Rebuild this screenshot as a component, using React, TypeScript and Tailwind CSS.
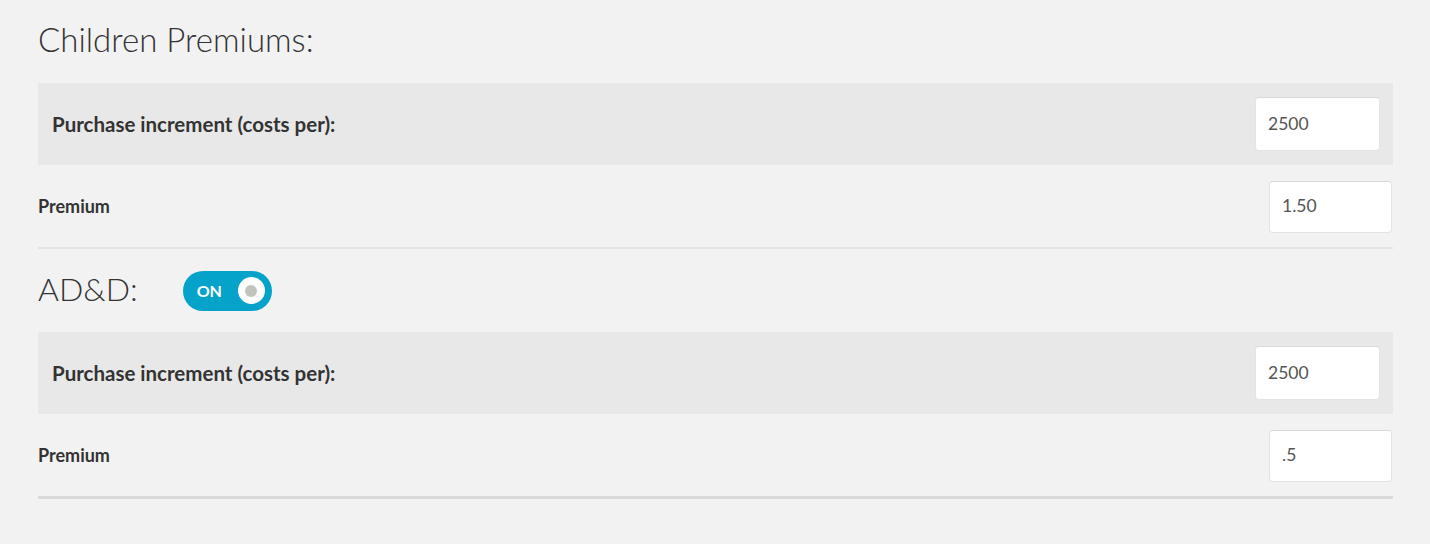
import React from "react";

function InputBox({ value, className }: { value: string; className: string }) {
  return (
    <div
      className={
        "flex items-center rounded-[4px] border border-[#e3e3e3] border-t-[#d9d9d9] bg-white pl-[12px] text-[17.5px] text-[#555555] " +
        className
      }
    >
      {value}
    </div>
  );
}

function Section({ premium }: { premium: string }) {
  return (
    <>
      <div className="flex h-[82px] items-center justify-between bg-[#e8e8e8] pl-[14px] pr-[13px]">
        <span className="text-[20.5px] font-bold text-[#333333]">Purchase increment (costs per):</span>
        <InputBox value="2500" className="h-[54px] w-[125px]" />
      </div>
      <div className="flex h-[82px] items-center justify-between">
        <span className="text-[18px] font-bold text-[#333333]">Premium</span>
        <InputBox value={premium} className="mr-[1px] mt-[1px] h-[52px] w-[123px]" />
      </div>
    </>
  );
}

export default function App() {
  return (
    <div
      className="min-h-[544px] w-full bg-[#f2f2f2] pl-[38px] pr-[37px]"
      style={{ fontFamily: "Lato, 'Open Sans', sans-serif" }}
    >
      <div className="flex h-[83px] items-center pb-[4px]">
        <h2 className="text-[33px] font-light text-[#333333]">Children Premiums:</h2>
      </div>
      <div className="border-b-2 border-[#e4e4e4]">
        <Section premium="1.50" />
      </div>
      <div className="flex h-[83px] items-center gap-[45px]">
        <h2 className="text-[32px] font-light text-[#333333] pb-[4px]">AD&amp;D:</h2>
        <div className="flex h-[40px] w-[89px] items-center justify-between rounded-full bg-[#05a3c9] pl-[14px] pr-[7px]">
          <span className="text-[16px] font-bold text-white">ON</span>
          <div className="flex h-[27px] w-[27px] items-center justify-center rounded-full bg-white">
            <div className="h-[12px] w-[12px] rounded-full bg-[#c1c4bd]" />
          </div>
        </div>
      </div>
      <div className="border-b-[3px] border-[#d9d9d9]">
        <Section premium=".5" />
      </div>
    </div>
  );
}
